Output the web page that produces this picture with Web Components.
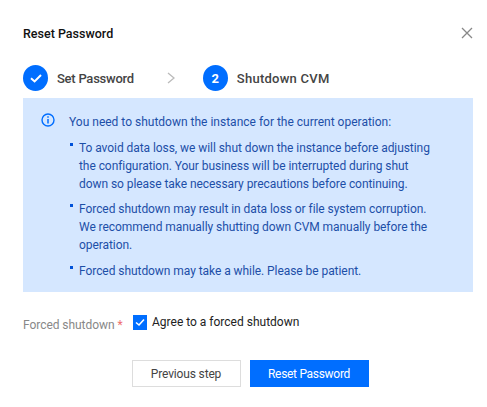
<!DOCTYPE html>
<html>
<head>
<meta charset="utf-8">
<title>Reset Password</title>
<style>
  html, body { margin: 0; background: #fff; }
  body { font-family: Roboto, "Noto Sans", sans-serif; font-size: 12px; }
</style>
</head>
<body>
<reset-dialog>
  <span slot="title">Reset Password</span>
  <step-bar slot="steps"></step-bar>
  <info-alert slot="alert">
    <span slot="head">You need to shutdown the instance for the current operation:</span>
    <li>To avoid data loss, we will shut down the instance before adjusting<br>the configuration. Your business will be interrupted during shut<br>down so please take necessary precautions before continuing.</li>
    <li>Forced shutdown may result in data loss or file system corruption.<br>We recommend manually shutting down CVM manually before the<br>operation.</li>
    <li>Forced shutdown may take a while. Please be patient.</li>
  </info-alert>
  <agree-field slot="form"></agree-field>
  <dialog-button slot="footer">Previous step</dialog-button>
  <dialog-button slot="footer" primary>Reset Password</dialog-button>
</reset-dialog>

<script>
class ResetDialog extends HTMLElement {
  constructor() {
    super();
    this.attachShadow({ mode: "open" }).innerHTML = `
      <style>
        :host { display: block; width: 487px; height: 407px; box-sizing: border-box; padding: 24px 14px 0 23px; color: #000; }
        .head { display: flex; justify-content: space-between; align-items: center; height: 18px; }
        .title { font-size: 12.5px; font-weight: 500; color: #111; }
        svg { display: block; }
        .steps { margin-top: 23px; }
        .alert { margin-top: 7px; }
        .form { margin-top: 21px; }
        .footer { display: flex; justify-content: center; gap: 9px; margin-top: 26px; width: 454px; }
      </style>
      <div class="head">
        <div class="title"><slot name="title"></slot></div>
        <svg width="12" height="12" viewBox="0 0 12 12"><path d="M1 1 L11 11 M11 1 L1 11" stroke="#888" stroke-width="1.3" fill="none"/></svg>
      </div>
      <div class="steps"><slot name="steps"></slot></div>
      <div class="alert"><slot name="alert"></slot></div>
      <div class="form"><slot name="form"></slot></div>
      <div class="footer"><slot name="footer"></slot></div>`;
  }
}

class StepBar extends HTMLElement {
  constructor() {
    super();
    this.attachShadow({ mode: "open" }).innerHTML = `
      <style>
        :host { display: flex; align-items: center; height: 26px; color: #444; font-size: 13px; font-weight: 500; }
        .dot { width: 25px; height: 26px; border-radius: 50%; background: #006eff; color: #fff; display: flex; align-items: center; justify-content: center; font-size: 13px; font-weight: 700; }
        .label { margin-left: 9px; letter-spacing: -.25px; }
        .label.wide { letter-spacing: .25px; }
        .sep { margin: 0 28px 0 33px; display: block; }
      </style>
      <div class="dot"><svg width="14" height="12" viewBox="0 0 14 12"><path d="M2 6.2 L5.6 9.4 L12 3" stroke="#fff" stroke-width="2" fill="none"/></svg></div>
      <span class="label">Set Password</span>
      <svg class="sep" width="8" height="12" viewBox="0 0 8 12"><path d="M1 1 L7 6 L1 11" stroke="#bbb" stroke-width="1.3" fill="none"/></svg>
      <div class="dot">2</div>
      <span class="label wide">Shutdown CVM</span>`;
  }
}

class InfoAlert extends HTMLElement {
  constructor() {
    super();
    this.attachShadow({ mode: "open" }).innerHTML = `
      <style>
        :host { display: block; width: 450px; height: 194px; box-sizing: border-box; background: #d5e7ff; color: #1d4fa8; padding: 15px 18px 0; font-size: 12px; line-height: 18px; }
        .head { display: flex; gap: 14px; margin-bottom: 2.5px; }
        svg { flex: none; }
        ::slotted(li) { list-style: none; margin: 7.5px 0 0 28px; padding-left: 10px; letter-spacing: -.06px; background: linear-gradient(#0052d9, #0052d9) 1px 4px / 3px 3px no-repeat; }
      </style>
      <div class="head">
        <svg width="14" height="14" viewBox="0 0 14 14"><circle cx="7" cy="7" r="6" stroke="#006eff" stroke-width="1.4" fill="none"/><path d="M7 3.2 V4.7 M7 6 V10.6" stroke="#006eff" stroke-width="1.5" fill="none"/></svg>
        <slot name="head"></slot>
      </div>
      <slot></slot>`;
  }
}

class AgreeField extends HTMLElement {
  constructor() {
    super();
    this.attachShadow({ mode: "open" }).innerHTML = `
      <style>
        :host { display: flex; align-items: flex-start; font-size: 12px; line-height: 18px; }
        .label { width: 110px; color: #888; padding-top: 3px; letter-spacing: -.05px; }
        .label b { color: #ee6f6f; font-weight: 400; }
        .check { display: flex; align-items: center; gap: 5px; color: #222; }
        .box { width: 14px; height: 15px; background: #006eff; display: flex; align-items: center; justify-content: center; }
      </style>
      <div class="label">Forced shutdown <b>*</b></div>
      <div class="check">
        <div class="box"><svg width="10" height="9" viewBox="0 0 10 9"><path d="M1 4.5 L4 7 L9 1.5" stroke="#fff" stroke-width="1.6" fill="none"/></svg></div>
        <span>Agree to a forced shutdown</span>
      </div>`;
  }
}

class DialogButton extends HTMLElement {
  constructor() {
    super();
    this.attachShadow({ mode: "open" }).innerHTML = `
      <style>
        :host { display: flex; align-items: center; justify-content: center; box-sizing: border-box; height: 27px; width: 109px; border: 1px solid #ddd; background: #fff; color: #444; font-size: 12px; letter-spacing: -.15px; }
        :host([primary]) { width: 119px; background: #006eff; border-color: #006eff; color: #fff; letter-spacing: -.3px; }
      </style>
      <slot></slot>`;
  }
}

customElements.define("reset-dialog", ResetDialog);
customElements.define("step-bar", StepBar);
customElements.define("info-alert", InfoAlert);
customElements.define("agree-field", AgreeField);
customElements.define("dialog-button", DialogButton);
</script>
</body>
</html>
